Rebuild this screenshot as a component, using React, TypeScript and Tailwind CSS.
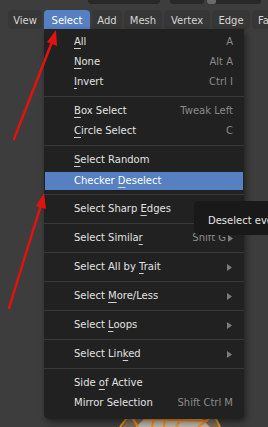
import React from "react";

type Item =
  | { kind: "sep" }
  | {
      kind: "item";
      pre: string;
      u?: string;
      post?: string;
      key?: string;
      sub?: boolean;
      active?: boolean;
    };

const MENU: Item[] = [
  { kind: "item", pre: "", u: "A", post: "ll", key: "A" },
  { kind: "item", pre: "", u: "N", post: "one", key: "Alt A" },
  { kind: "item", pre: "", u: "I", post: "nvert", key: "Ctrl I" },
  { kind: "sep" },
  { kind: "item", pre: "", u: "B", post: "ox Select", key: "Tweak Left" },
  { kind: "item", pre: "", u: "C", post: "ircle Select", key: "C" },
  { kind: "sep" },
  { kind: "item", pre: "", u: "S", post: "elect Random" },
  { kind: "item", pre: "Checker ", u: "D", post: "eselect", active: true },
  { kind: "sep" },
  { kind: "item", pre: "Select Sharp ", u: "E", post: "dges" },
  { kind: "sep" },
  { kind: "item", pre: "Select Simila", u: "r", post: "", key: "Shift G", sub: true },
  { kind: "sep" },
  { kind: "item", pre: "Select All by ", u: "T", post: "rait", sub: true },
  { kind: "sep" },
  { kind: "item", pre: "Select ", u: "M", post: "ore/Less", sub: true },
  { kind: "sep" },
  { kind: "item", pre: "Select ", u: "L", post: "oops", sub: true },
  { kind: "sep" },
  { kind: "item", pre: "Select Lin", u: "k", post: "ed", sub: true },
  { kind: "sep" },
  { kind: "item", pre: "Side ", u: "o", post: "f Active" },
  { kind: "item", pre: "Mirror Selection", key: "Shift Ctrl M" },
];

// header menus, widths read off the screenshot
const HEADER = [
  { label: "View", w: "w-[34px] justify-center" },
  { label: "Select", w: "w-[46px] justify-center" },
  { label: "Add", w: "w-[30px] justify-center" },
  { label: "Mesh", w: "w-[38px] justify-center" },
  { label: "Vertex", w: "w-[46px] justify-center" },
  { label: "Edge", w: "w-[38px] justify-center" },
  { label: "Fa", w: "w-[30px] justify-start pl-[6px]" },
];

function SubArrow() {
  return (
    <svg width="5" height="7" viewBox="0 0 5 7" className="shrink-0">
      <polygon points="0,0 5,3.5 0,7" fill="#7c7c7c" />
    </svg>
  );
}

export default function App() {
  return (
    <div
      className="relative w-[268px] h-[427px] overflow-hidden bg-[#3d3d3d] text-[10px] leading-none"
      style={{ fontFamily: '"DejaVu Sans", sans-serif' }}
    >
      {/* ── top strip (bottoms of the widgets above) ── */}
      <div className="flex h-[5px] items-start">
        <div className="ml-[88px] w-[72px] h-[4px] rounded-b-[3px] bg-[#282828]" />
        <div className="ml-[10px] w-[34px] h-[4px] rounded-b-[3px] bg-[#282828]" />
        <div className="ml-[3px] w-[9px] h-[4px] rounded-b-[3px] bg-[#6a6a6a]" />
        <div className="w-[45px] h-[4px] rounded-br-[3px] bg-[#282828]" />
      </div>

      {/* ── header menus ── */}
      <div className="flex gap-[2px] pl-[8px] pt-[5px] h-[24px] whitespace-nowrap">
        {HEADER.map((h) => (
          <div
            key={h.label}
            className={
              h.label === "Select"
                ? `${h.w} shrink-0 flex items-center pt-[2px] h-[19px] rounded-t-[4px] bg-[#5680c2] text-white`
                : `${h.w} shrink-0 flex items-center pt-[2px] h-[19px] rounded-[4px] bg-[#373737] text-[#d4d4d4]`
            }
          >
            {h.label}
          </div>
        ))}
      </div>

      {/* ── orange object in the viewport ── */}
      <svg className="absolute left-[116px] top-[406px]" width="108" height="21" viewBox="0 0 108 21">
        <path d="M6 21 L14 8 L40 4 L70 5 L98 9 L104 21 Z" fill="#7a6a5a" />
        <path d="M20 21 L30 11 L60 10 L86 13 L94 21 Z" fill="#bcb0a4" />
        <path
          d="M4 21 L14 8 L40 4 L70 5 L98 9 L104 21 M14 8 L22 21 M40 4 L36 21 M70 5 L60 21 M98 9 L82 21 M28 13 L92 15 M50 6 L48 21"
          fill="none"
          stroke="#f08a10"
          strokeWidth="2"
        />
      </svg>

      {/* ── dropdown ── */}
      <div className="absolute left-[44px] top-[29px] w-[200px] bg-[#212121] rounded-b-[5px] pt-[3px] pb-[6px] shadow-[2px_3px_6px_rgba(0,0,0,0.45)]">
        {MENU.map((m, i) =>
          m.kind === "sep" ? (
            <div key={i} className="h-[9px] flex items-center">
              <div className="w-full h-px bg-[#393939]" />
            </div>
          ) : (
            <div key={i} className="h-[20px] flex flex-col">
              <div
                className={
                  m.active
                    ? "mt-[2px] h-[18px] mx-px flex items-center pl-[29px] pr-[10px] bg-[#5680c2] text-white"
                    : "h-[20px] flex items-center pl-[30px] pr-[11px] text-[#e2e2e2]"
                }
              >
                <span className="flex-1 whitespace-nowrap">
                  {m.pre}
                  {m.u && (
                    <span className="underline underline-offset-[3px] decoration-[#cfcfcf]">{m.u}</span>
                  )}
                  {m.post}
                </span>
                {m.key && <span className="text-[#8a8a8a] whitespace-nowrap">{m.key}</span>}
                {m.sub && (
                  <span className={m.key ? "ml-[2px]" : "mr-[1px]"}>
                    <SubArrow />
                  </span>
                )}
              </div>
            </div>
          )
        )}
      </div>

      {/* ── tooltip, runs past the right edge as in the shot ── */}
      <div className="absolute left-[194px] top-[201px] w-[100px] h-[34px] rounded-[5px] bg-[#191919] flex items-center pl-[14px] pt-[6px] text-[#e4e4e4] whitespace-nowrap">
        Deselect every other vertex
      </div>

      {/* ── red annotation arrows ── */}
      <svg className="absolute inset-0" width="268" height="427" viewBox="0 0 268 427">
        <line x1="14" y1="139" x2="52" y2="42" stroke="#e3120f" strokeWidth="2.5" strokeLinecap="round" />
        <polygon points="56,30 57,46 47,42" fill="#e3120f" />
        <line x1="9" y1="308" x2="41" y2="205" stroke="#e3120f" strokeWidth="2.5" strokeLinecap="round" />
        <polygon points="44,193 46,209 36,206" fill="#e3120f" />
      </svg>
    </div>
  );
}
